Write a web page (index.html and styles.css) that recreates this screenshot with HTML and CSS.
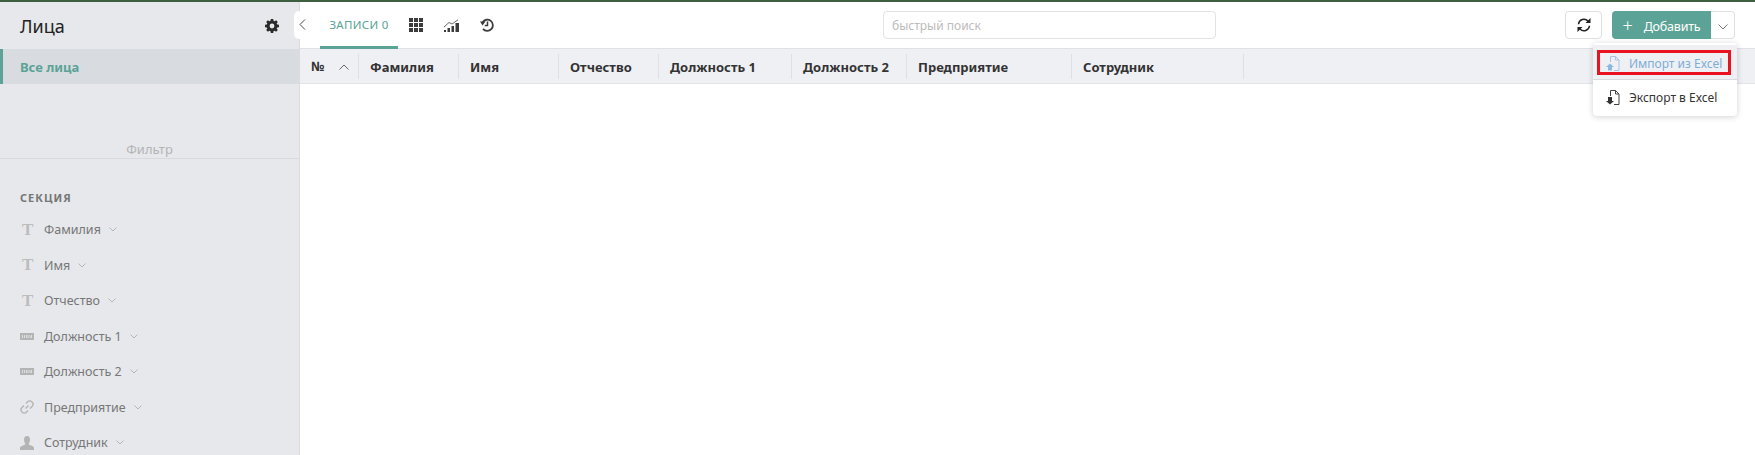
FILE: index.html
```html
<!DOCTYPE html>
<html lang="ru">
  <head>
    <meta charset="UTF-8" />
    <meta name="viewport" content="width=device-width, initial-scale=1.0" />
    <title>Лица</title>
    <link rel="stylesheet" href="styles.css">
  </head>
  <body>
    <div class="strip"></div>
    <div class="app">
      <aside class="sidebar">
        <div class="side-head">
          <span class="side-title">Лица</span>
          <svg class="gear" viewBox="0 0 14 14" width="14" height="14"><path fill="#2b2b2b" fill-rule="evenodd" d="M5.8 0h2.4l.3 1.8 1.1.5L11.1 1.2l1.7 1.7-1.1 1.5.5 1.1 1.8.3v2.4l-1.8.3-.5 1.1 1.1 1.5-1.7 1.7-1.5-1.1-1.1.5-.3 1.8H5.8l-.3-1.8-1.1-.5-1.5 1.1-1.7-1.7 1.1-1.5-.5-1.1L0 8.2V5.8l1.8-.3.5-1.1-1.1-1.5 1.7-1.7 1.5 1.1 1.1-.5zM7 4.6a2.4 2.4 0 1 0 0 4.8 2.4 2.4 0 0 0 0-4.8z"/></svg>
        </div>
        <div class="side-item">Все лица</div>
        <div class="filter-label">Фильтр</div>
        <div class="section">
          <div class="section-title">СЕКЦИЯ</div>
          <div class="field"><span class="ficon t-icon">T</span><span>Фамилия</span><svg class="chev" viewBox="0 0 8 5" width="8" height="5"><path d="M.5.5 4 4 7.5.5" fill="none" stroke="#b5b5b5"/></svg></div>
          <div class="field"><span class="ficon t-icon">T</span><span>Имя</span><svg class="chev" viewBox="0 0 8 5" width="8" height="5"><path d="M.5.5 4 4 7.5.5" fill="none" stroke="#b5b5b5"/></svg></div>
          <div class="field"><span class="ficon t-icon">T</span><span>Отчество</span><svg class="chev" viewBox="0 0 8 5" width="8" height="5"><path d="M.5.5 4 4 7.5.5" fill="none" stroke="#b5b5b5"/></svg></div>
          <div class="field"><span class="ficon"><svg viewBox="0 0 14 7" width="14" height="7"><rect width="14" height="7" fill="#b4b4b4"/><path d="M2.5 2v3M4.5 2v3M6.5 2v3M8 2v3M10 2v3M11.5 2v3" stroke="#e6e8ec" stroke-width=".8"/></svg></span><span>Должность 1</span><svg class="chev" viewBox="0 0 8 5" width="8" height="5"><path d="M.5.5 4 4 7.5.5" fill="none" stroke="#b5b5b5"/></svg></div>
          <div class="field"><span class="ficon"><svg viewBox="0 0 14 7" width="14" height="7"><rect width="14" height="7" fill="#b4b4b4"/><path d="M2.5 2v3M4.5 2v3M6.5 2v3M8 2v3M10 2v3M11.5 2v3" stroke="#e6e8ec" stroke-width=".8"/></svg></span><span>Должность 2</span><svg class="chev" viewBox="0 0 8 5" width="8" height="5"><path d="M.5.5 4 4 7.5.5" fill="none" stroke="#b5b5b5"/></svg></div>
          <div class="field"><span class="ficon"><svg viewBox="0 0 14 14" width="14" height="14"><path d="M5.5 8.500 8.500 5.500M6 3.500l1.500-1.500a2.500 2.500 0 0 1 4.500 4.500L10 8.500M8 10.500 6.500 12a2.500 2.500 0 0 1-4.500-4.500L4 5.500" fill="none" stroke="#b4b4b4" stroke-width="1.4"/></svg></span><span>Предприятие</span><svg class="chev" viewBox="0 0 8 5" width="8" height="5"><path d="M.5.5 4 4 7.5.5" fill="none" stroke="#b5b5b5"/></svg></div>
          <div class="field"><span class="ficon"><svg viewBox="0 0 14 14" width="14" height="14"><path fill="#b4b4b4" d="M7 0c2 0 3 1.500 3 3.500S9 7 8.600 8c0 1 4.400 1.500 5.400 3.500V14H0v-2.500C1 9.500 5.400 9 5.400 8 5 7 4 5.500 4 3.500S5 0 7 0z"/></svg></span><span>Сотрудник</span><svg class="chev" viewBox="0 0 8 5" width="8" height="5"><path d="M.5.5 4 4 7.5.5" fill="none" stroke="#b5b5b5"/></svg></div>
        </div>
      </aside>

      <main class="content">
        <button class="collapse"><svg viewBox="0 0 7 11" width="7" height="11"><path d="M6 .5 1 5.500l5 5" fill="none" stroke="#444"/></svg></button>
        <div class="toolbar">
          <div class="tabs">
            <div class="tab active">ЗАПИСИ 0</div>
            <div class="tab-icon">
              <svg viewBox="0 0 14 14" width="14" height="14"><path fill="#3c3c3c" d="M0 0h4v4H0zM5 0h4v4H5zM10 0h4v4h-4zM0 5h4v4H0zM5 5h4v4H5zM10 5h4v4h-4zM0 10h4v4H0zM5 10h4v4H5zM10 10h4v4h-4z"/></svg>
            </div>
            <div class="tab-icon">
              <svg viewBox="0 0 15 13" width="15" height="13"><path fill="#3c3c3c" d="M0 11h2v2H0zM3.500 9H6v4H3.500zM7.500 7H10v6H7.500zM11.500 4H15v9h-3.500z"/><path d="M0 8 5 3.500 8 5 14 .8" fill="none" stroke="#666"/></svg>
            </div>
            <div class="tab-icon">
              <svg viewBox="0 0 14 14" width="14" height="14"><path d="M2.600 4.200A5.600 5.600 0 1 1 3 10.900" fill="none" stroke="#3c3c3c" stroke-width="1.800"/><path fill="#3c3c3c" d="M0 3.500h5.500L2.500 7.500z"/><path d="M7.500 3.500v4H4.800" fill="none" stroke="#3c3c3c" stroke-width="1.500"/></svg>
            </div>
          </div>
          <input class="search" type="text" placeholder="быстрый поиск">
          <div class="actions">
            <button class="btn-refresh">
              <svg viewBox="0 0 14 14" width="14" height="14"><path d="M1.500 6.200A5.500 5.500 0 0 1 11 3M12.500 7.800A5.500 5.500 0 0 1 3 11" fill="none" stroke="#222" stroke-width="1.500"/><path fill="#222" d="M13.500 0v5h-5zM.5 14V9h5z"/></svg>
            </button>
            <div class="add-group">
              <button class="btn-add"><span class="plus">+</span>Добавить</button>
              <button class="btn-caret"><svg viewBox="0 0 10 6" width="10" height="6"><path d="M.5.500 5 5 9.500.500" fill="none" stroke="#777"/></svg></button>
            </div>
          </div>
        </div>
        <div class="thead">
          <div class="th col-num">№<svg viewBox="0 0 10 6" width="10" height="6"><path d="M.5 5.500 5 1l4.500 4.500" fill="none" stroke="#666"/></svg></div>
          <div class="th col-fam">Фамилия</div>
          <div class="th col-name">Имя</div>
          <div class="th col-name">Отчество</div>
          <div class="th col-pos1">Должность 1</div>
          <div class="th col-pos2">Должность 2</div>
          <div class="th col-org">Предприятие</div>
          <div class="th col-emp">Сотрудник</div>
        </div>

        <div class="menu">
          <div class="menu-item hot">
            <svg viewBox="0 0 14 15" width="14" height="15"><path d="M4.500 6V.5h5L13 4v10.500H8M9.500.5V4H13" fill="none" stroke="#a9c6de"/><path fill="#8db9dc" d="M4 7.500 8 11H6v3.500H2V11H0z"/></svg>
            <span>Импорт из Excel</span>
          </div>
          <div class="menu-item">
            <svg viewBox="0 0 14 15" width="14" height="15"><path d="M4.500 6V.5h5L13 4v10.500H8M9.500.5V4H13" fill="none" stroke="#444"/><path fill="#333" d="M2 7h4v4h2l-4 3.500L0 11h2z"/></svg>
            <span>Экспорт в Excel</span>
          </div>
        </div>
      </main>
    </div>
  </body>
</html>
```

FILE: styles.css
```css
* {
  box-sizing: border-box;
}
html,
body {
  height: 100%;
}
body {
  margin: 0;
  display: flex;
  flex-direction: column;
  overflow: hidden;
  font-family: "Noto Sans", "Open Sans", sans-serif;
  font-size: 13px;
  color: #333;
  background: #fff;
}
button {
  font-family: inherit;
  cursor: pointer;
}
.strip {
  height: 2px;
  flex: none;
  background: #3d5f3f;
}
.app {
  flex: 1;
  display: flex;
  min-height: 0;
}

/* left column */
.sidebar {
  width: 300px;
  flex: none;
  background: #e6e8ec;
  border-right: 1px solid #d9dbdf;
}
.side-head {
  height: 47px;
  padding: 0 20px;
  display: flex;
  align-items: center;
  justify-content: space-between;
}
.side-title {
  font-size: 18px;
  color: #222;
}
.side-item {
  height: 35px;
  line-height: 37px;
  padding-left: 17px;
  border-left: 3px solid #5ba396;
  background: #d8dbdf;
  color: #5ba396;
  font-weight: 700;
}
.filter-label {
  height: 75px;
  padding-top: 56px;
  line-height: 18px;
  text-align: center;
  color: #b4b4b4;
  border-bottom: 1px solid #d7d9dd;
}
.section {
  padding: 30px 0 0 20px;
}
.section-title {
  font-size: 11px;
  font-weight: 700;
  letter-spacing: 1px;
  line-height: 18px;
  color: #777;
  margin-bottom: 5px;
}
.field {
  height: 35.5px;
  display: flex;
  align-items: center;
  font-size: 12.5px;
  color: #777;
}
.ficon {
  width: 24px;
  flex: none;
  display: flex;
  align-items: center;
}
.t-icon {
  padding-left: 2px;
  font-family: "Liberation Serif", serif;
  font-size: 17px;
  font-weight: 700;
  color: #bcbcbc;
}
.chev {
  margin-left: 8px;
}

/* right part */
.content {
  flex: 1;
  min-width: 0;
  position: relative;
}
.collapse {
  position: absolute;
  left: -6px;
  top: 9px;
  width: 17px;
  height: 28px;
  padding: 0;
  border: 0;
  border-radius: 5px;
  background: #fff;
}
.toolbar {
  height: 47px;
  display: flex;
  align-items: flex-start;
  padding-left: 20px;
  border-bottom: 1px solid #dfe1e5;
}
.tabs {
  width: 563px;
  height: 47px;
  flex: none;
  display: flex;
}
.tab {
  width: 78px;
  height: 47px;
  line-height: 46px;
  text-align: center;
  font-size: 11.5px;
  letter-spacing: .3px;
  color: #5ba396;
}
.tab.active {
  border-bottom: 3px solid #5ba396;
}
.tab-icon {
  height: 46px;
  width: 35.5px;
  display: flex;
  align-items: center;
  justify-content: center;
}
.search {
  width: 333px;
  height: 28px;
  margin-top: 9px;
  padding: 0 8px;
  border: 1px solid #e3e3e3;
  border-radius: 4px;
  outline: none;
  font-family: inherit;
  font-size: 12px;
}
.search::placeholder {
  color: #bbb;
}
.actions {
  margin-left: auto;
  margin-right: 20px;
  padding-top: 9px;
  display: flex;
  gap: 10px;
}
.btn-refresh {
  width: 37px;
  height: 28px;
  padding: 0;
  border: 1px solid #e0e0e0;
  border-radius: 4px;
  background: #fff;
  display: flex;
  align-items: center;
  justify-content: center;
}
.add-group {
  display: flex;
}
.btn-add {
  width: 99px;
  height: 28px;
  padding: 0;
  border: 0;
  border-radius: 4px 0 0 4px;
  background: #5ba396;
  color: #fff;
  font-size: 12.5px;
  letter-spacing: -.2px;
}
.plus {
  font-size: 18px;
  font-weight: 300;
  line-height: 18px;
  margin-right: 11px;
  vertical-align: -1px;
}
.btn-caret {
  width: 24px;
  height: 28px;
  padding: 0;
  border: 1px solid #e0e0e0;
  border-left: 0;
  border-radius: 0 4px 4px 0;
  background: #fff;
}

/* table head */
.thead {
  height: 35px;
  padding: 5px 0;
  display: flex;
  background: #eff0f4;
  border-bottom: 1px solid #e2e3e6;
}
.th {
  height: 25px;
  line-height: 27px;
  padding-left: 11px;
  font-weight: 700;
  color: #333;
  border-right: 1px solid #dfe0e4;
}
.col-num {
  width: 59px;
  display: flex;
  align-items: center;
  justify-content: space-between;
  padding-right: 9px;
}
.col-fam,
.col-name {
  width: 100px;
}
.col-pos1 {
  width: 133px;
}
.col-pos2 {
  width: 115px;
}
.col-org {
  width: 165px;
}
.col-emp {
  width: 172px;
}

/* excel menu */
.menu {
  position: absolute;
  top: 41px;
  right: 18px;
  width: 144px;
  height: 73px;
  padding: 2px 0;
  background: #fff;
  border-radius: 4px;
  box-shadow: 0 1px 6px rgba(0, 0, 0, .18);
}
.menu-item {
  height: 35px;
  display: flex;
  align-items: center;
  gap: 9px;
  padding-left: 13px;
  font-size: 12px;
}
.menu-item.hot {
  height: 35px;
  padding-top: 3px;
  background: #eff0f4;
  border-bottom: 1px solid #d9dbdf;
  color: #7dadd6;
  position: relative;
}
.menu-item.hot::after {
  content: "";
  box-sizing: border-box;
  position: absolute;
  left: 4px;
  right: 6px;
  top: 5px;
  height: 25px;
  border: 3px solid #e8131f;
}
```
